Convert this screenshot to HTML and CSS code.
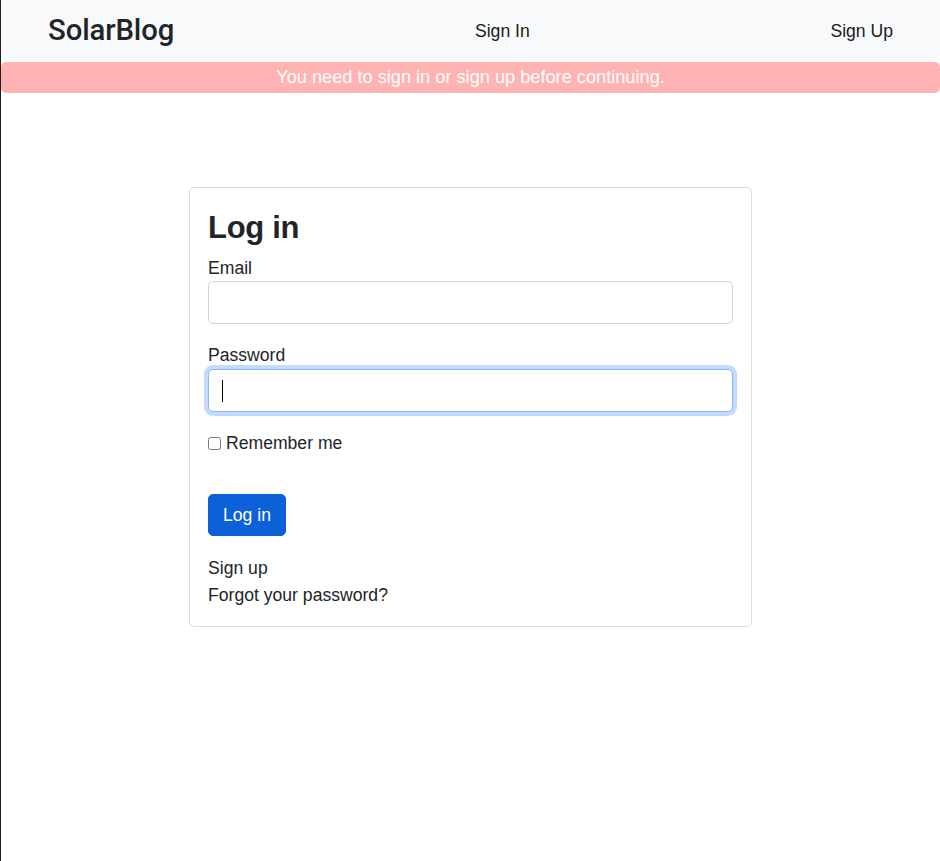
FILE: index.html
```html
<!DOCTYPE html>
<html lang="en">
<head>
<meta charset="utf-8">
<title>SolarBlog</title>
<link rel="stylesheet" href="styles.css">
</head>
<body>
  <nav class="navbar">
    <a class="brand" href="#">SolarBlog</a>
    <a class="nav-link" href="#">Sign In</a>
    <a class="nav-link" href="#">Sign Up</a>
  </nav>
  <div class="alert">You need to sign in or sign up before continuing.</div>
  <main class="main">
    <div class="card">
      <h2 class="title">Log in</h2>
      <form class="form">
        <div class="field">
          <label class="label" for="email">Email</label>
          <input class="control" id="email" type="email">
        </div>
        <div class="field">
          <label class="label" for="password">Password</label>
          <div class="control-wrap">
            <input class="control focused" id="password" type="password">
            <span class="caret"></span>
          </div>
        </div>
        <div class="check">
          <input class="checkbox" id="remember" type="checkbox">
          <label for="remember">Remember me</label>
        </div>
        <div class="actions">
          <button class="btn" type="button">Log in</button>
        </div>
      </form>
      <div class="links">
        <a href="#">Sign up</a>
        <a href="#">Forgot your password?</a>
      </div>
    </div>
  </main>
</body>
</html>
```
FILE: styles.css
```css
* { box-sizing: border-box; }
html, body { margin: 0; padding: 0; }
body {
  border-left: 1px solid #1e1e1e;
  min-height: 861px;
  background: #fff;
  color: #212529;
  font-family: "Liberation Sans", Arial, sans-serif;
  font-size: 17.6px;
  line-height: 26.4px;
}
a { color: #212529; text-decoration: none; }

.navbar {
  height: 61px;
  background: #f8f9fa;
  padding: 0 47px;
  display: flex;
  align-items: center;
  justify-content: space-between;
}
.brand {
  font-family: Roboto, "Liberation Sans", sans-serif;
  font-size: 29.3px;
  font-weight: 500;
  line-height: 36px;
  margin-top: -2px;
  letter-spacing: -0.1px;
}
.nav-link {
  color: #1a1a1a;
  margin-top: 2px;
}

.alert {
  height: 31px;
  background: #ffb3b3;
  color: #fff;
  text-align: center;
  border-radius: 5px;
  margin-top: 1px;
  line-height: 31px;
  font-size: 18.2px;
}

.main {
  padding-top: 94px;
  display: flex;
  justify-content: center;
}
.card {
  width: 563px;
  border: 1px solid #dcdcdc;
  border-radius: 5px;
  padding: 17px 18px 17px 18px;
}
.title {
  margin: 4px 0 8px;
  font-size: 31px;
  font-weight: 700;
  line-height: 38px;
  letter-spacing: -0.3px;
}
.field { margin-bottom: 18px; }
.label { display: block; }
.control {
  display: block;
  width: 100%;
  height: 43px;
  border: 1px solid #ced4da;
  border-radius: 5px;
  padding: 6px 13px;
  font: inherit;
  outline: none;
  background: #fff;
}
.control-wrap { position: relative; }
.control.focused {
  border-color: #86b7fe;
  box-shadow: 0 0 0 4px rgba(13, 110, 253, 0.25);
}
.caret {
  position: absolute;
  left: 14px;
  top: 11px;
  width: 1px;
  height: 22px;
  background: #000;
}
.check {
  display: flex;
  align-items: center;
  gap: 5px;
  margin-bottom: 38px;
}
.checkbox {
  margin: 0;
  width: 13px;
  height: 13px;
}
.actions { margin-bottom: 19px; }
.btn {
  width: 78px;
  height: 42px;
  border: 1px solid #0c60d8;
  border-radius: 5px;
  background: #0c60d8;
  color: #fff;
  font: inherit;
  padding: 0;
}
.links {
  display: flex;
  flex-direction: column;
  align-items: flex-start;
  line-height: 27px;
}
```
